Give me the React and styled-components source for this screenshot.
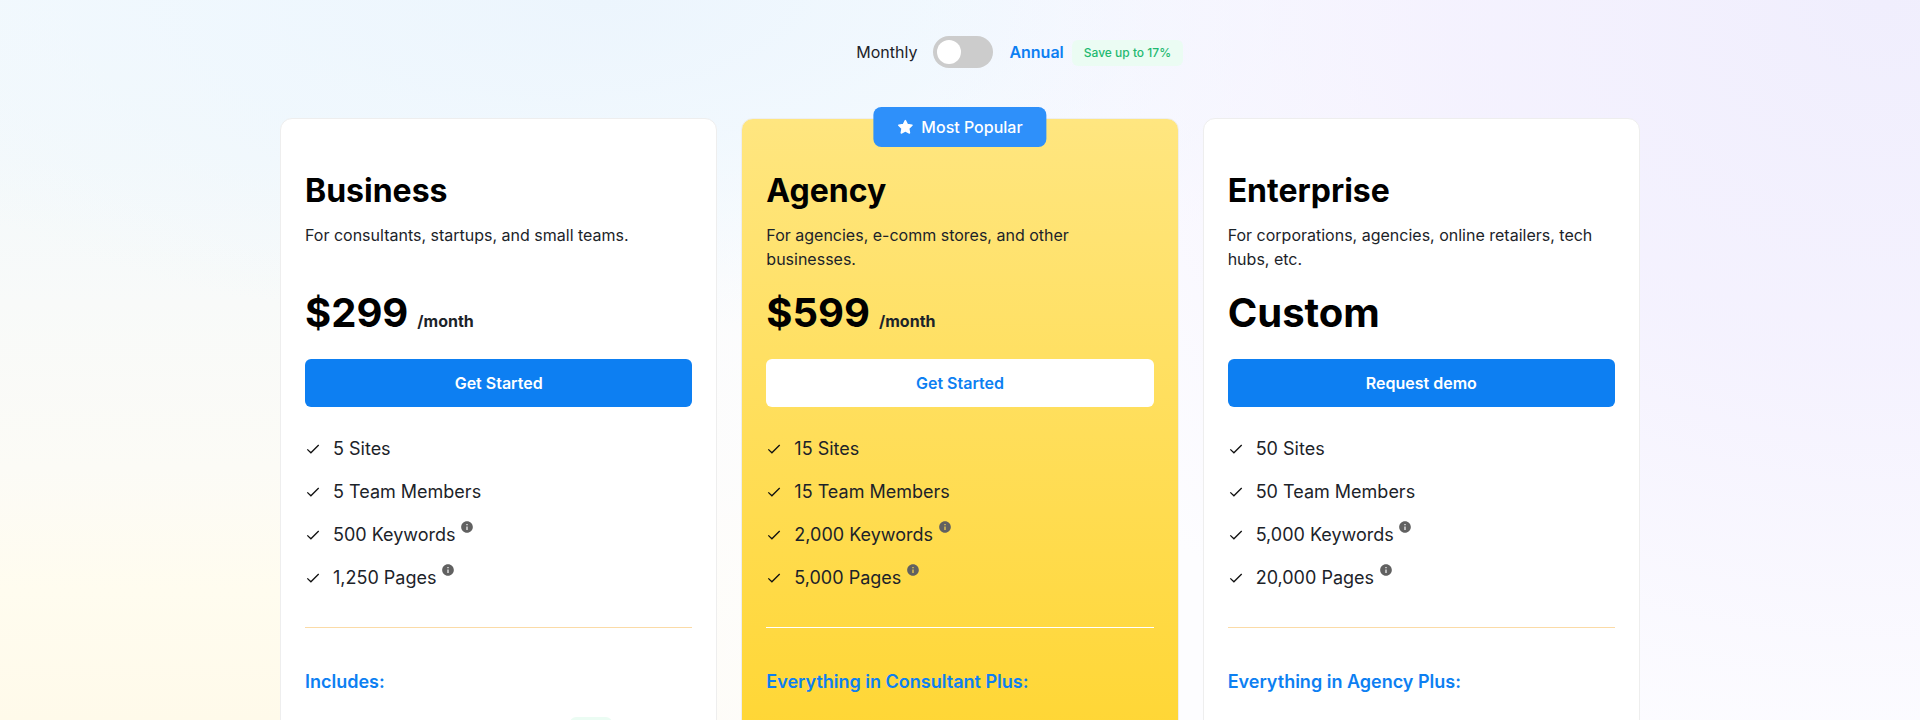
import React, { useState } from 'react'
import styled, { createGlobalStyle } from 'styled-components'

const GlobalStyle = createGlobalStyle`
    * { box-sizing: border-box; }
    body {
        margin: 0;
        height: 720px;
        overflow: hidden;
        font-family: Inter, "Liberation Sans", sans-serif;
        font-size: 16px;
        line-height: 24px;
        color: #1c2329;
    }
`
const Page = styled.main`
    height: 720px;
    overflow: hidden;
    background:
        radial-gradient(ellipse 960px 800px at 98% 0%, #f0eefd 0%, rgba(243,240,254,0.85) 45%, rgba(248,246,255,0) 100%),
        radial-gradient(ellipse 820px 330px at 31% 0%, #ecf5fd 0%, rgba(238,247,254,0.75) 45%, rgba(243,250,254,0) 100%),
        linear-gradient(90deg, rgba(253,253,255,0) 15%, rgba(253,253,255,0.7) 38%, #fdfdff 60%),
        linear-gradient(180deg, #f3f9fd 0%, #f4f9fb 22%, #f8faf9 42%, #fcfbf6 65%, #fffcef 82%, #fffaea 100%);
`
const Container = styled.div`
    width: 1360px;
    margin: 0 auto;
    padding-top: 36px;
`
const BillingSwitch = styled.div`
    display: flex;
    justify-content: center;
    align-items: center;
    gap: 16px;
    height: 32px;
    margin-bottom: 50px;
`
const Toggle = styled.button`
    width: 60px;
    height: 32px;
    padding: 4px;
    border: 0;
    border-radius: 16px;
    background: ${props => props.$on ? '#0d7ff2' : '#ccc'};
    display: flex;
    justify-content: ${props => props.$on ? 'flex-end' : 'flex-start'};
`
const Knob = styled.span`
    width: 24px;
    height: 24px;
    border-radius: 50%;
    background: white;
`
const Annual = styled.span`
    position: relative;
    font-weight: 600;
    color: #0d7ff2;
`
const SaveBadge = styled.span`
    position: absolute;
    left: calc(100% + 8px);
    top: 0;
    padding: 4px 12px;
    border-radius: 6px;
    background: #ebfcf3;
    color: #1fb971;
    font-size: 12px;
    font-weight: 500;
    line-height: 18px;
    white-space: nowrap;
`
const Plans = styled.div`
    display: grid;
    grid-template-columns: repeat(3, 1fr);
    gap: 24px;
`
const Card = styled.section`
    position: relative;
    height: 900px;
    padding: 53px 24px 24px;
    border: 1px solid #eeeeee;
    border-radius: 12px;
    background: ${props => props.$popular ? 'linear-gradient(180deg, #ffe680 0%, #ffd633 70%, #ffd020 100%)' : 'white'};
`
const PopularBadge = styled.div`
    position: absolute;
    top: -12px;
    left: 50%;
    transform: translateX(-50%);
    display: flex;
    align-items: center;
    gap: 8px;
    height: 40px;
    padding: 0 24px;
    border-radius: 8px;
    background: #2e90fa;
    color: white;
    font-weight: 500;
    white-space: nowrap;
`
const PlanName = styled.h2`
    margin: 0 0 13px;
    font-size: 32px;
    font-weight: 700;
    line-height: 38px;
    color: #000;
`
const Description = styled.p`
    margin: 0 0 18px;
    height: 48px;
`
const Price = styled.div`
    display: flex;
    align-items: baseline;
    gap: 9px;
    height: 70px;
    font-size: 40px;
    font-weight: 700;
    line-height: 48px;
    color: #000;
`
const Period = styled.span`
    font-size: 16px;
    font-weight: 700;
    color: #1c2329;
`
const PlanButton = styled.button`
    width: 100%;
    height: 48px;
    border: 0;
    border-radius: 6px;
    background: ${props => props.$light ? 'white' : '#0d7ff2'};
    color: ${props => props.$light ? '#0d7ff2' : 'white'};
    font: 600 16px/24px Inter, sans-serif;
`
const FeatureList = styled.ul`
    list-style: none;
    margin: 28px 0 36px;
    padding: 0;
    display: flex;
    flex-direction: column;
    gap: 16px;
`
const Feature = styled.li`
    display: flex;
    align-items: center;
    height: 27px;
    font-size: 18px;
    line-height: 27px;
`
const CheckIcon = styled.svg`
    width: 16px;
    height: 16px;
    margin-right: 12px;
`
const InfoIcon = styled.svg`
    width: 14px;
    height: 14px;
    margin: 0 0 15px 4.6px;
`
const Divider = styled.hr`
    height: 1px;
    margin: 0 0 40px;
    border: 0;
    background: ${props => props.$light ? 'white' : '#fbdba7'};
`
const IncludesTitle = styled.h3`
    margin: 0 0 22px;
    font-size: 18px;
    font-weight: 600;
    line-height: 27px;
    color: #0d7ff2;
`
const NewBadge = styled.div`
    width: 42px;
    height: 26px;
    margin-left: 265px;
    border-radius: 6px;
    background: #ebfcf3;
`

const plans = [
    {
        name: 'Business',
        description: 'For consultants, startups, and small teams.',
        price: '$299',
        action: 'Get Started',
        features: ['5 Sites', '5 Team Members', '500 Keywords', '1,250 Pages'],
        includes: 'Includes:',
        hasBadge: true,
    },
    {
        name: 'Agency',
        description: 'For agencies, e-comm stores, and other businesses.',
        price: '$599',
        action: 'Get Started',
        features: ['15 Sites', '15 Team Members', '2,000 Keywords', '5,000 Pages'],
        includes: 'Everything in Consultant Plus:',
        popular: true,
    },
    {
        name: 'Enterprise',
        description: 'For corporations, agencies, online retailers, tech hubs, etc.',
        price: 'Custom',
        action: 'Request demo',
        features: ['50 Sites', '50 Team Members', '5,000 Keywords', '20,000 Pages'],
        includes: 'Everything in Agency Plus:',
    },
]

const Check = () => (
    <CheckIcon viewBox="0 0 16 16" fill="none">
        <path d="M2.3 8.4 L5.9 11.8 L13.7 4" stroke="#111" strokeWidth="1.3" />
    </CheckIcon>
)

const Info = () => (
    <InfoIcon viewBox="0 0 24 24" fill="#616161">
        <path d="M12 2C6.48 2 2 6.48 2 12s4.48 10 10 10 10-4.48 10-10S17.52 2 12 2zm1 15h-2v-6h2v6zm0-8h-2V7h2v2z" />
    </InfoIcon>
)

const Star = () => (
    <svg width="16" height="16" viewBox="0 0 16 16">
        <path d="M8 1.6 L10 5.6 L14.6 6.3 L11.3 9.4 L12.1 14 L8 11.8 L3.9 14 L4.7 9.4 L1.4 6.3 L6 5.6 Z" fill="white" stroke="white" strokeWidth="1.5" strokeLinejoin="round" />
    </svg>
)

const PlanCard = ({ plan }) => (
    <Card $popular={plan.popular}>
        {plan.popular && <PopularBadge><Star />Most Popular</PopularBadge>}
        <PlanName>{plan.name}</PlanName>
        <Description>{plan.description}</Description>
        <Price>
            {plan.price}
            {plan.price !== 'Custom' && <Period>/month</Period>}
        </Price>
        <PlanButton $light={plan.popular}>{plan.action}</PlanButton>
        <FeatureList>
            {plan.features.map((feature, index) => (
                <Feature key={feature}>
                    <Check />
                    {feature}
                    {index > 1 && <Info />}
                </Feature>
            ))}
        </FeatureList>
        <Divider $light={plan.popular} />
        <IncludesTitle>{plan.includes}</IncludesTitle>
        {plan.hasBadge && <NewBadge />}
    </Card>
)

export default function App() {
    const [annual, setAnnual] = useState(false)

    return (
        <Page>
            <GlobalStyle />
            <Container>
                <BillingSwitch>
                    <span>Monthly</span>
                    <Toggle $on={annual} onClick={() => setAnnual(!annual)}><Knob /></Toggle>
                    <Annual>
                        Annual
                        <SaveBadge>Save up to 17%</SaveBadge>
                    </Annual>
                </BillingSwitch>
                <Plans>
                    {plans.map(plan => <PlanCard key={plan.name} plan={plan} />)}
                </Plans>
            </Container>
        </Page>
    )
}
